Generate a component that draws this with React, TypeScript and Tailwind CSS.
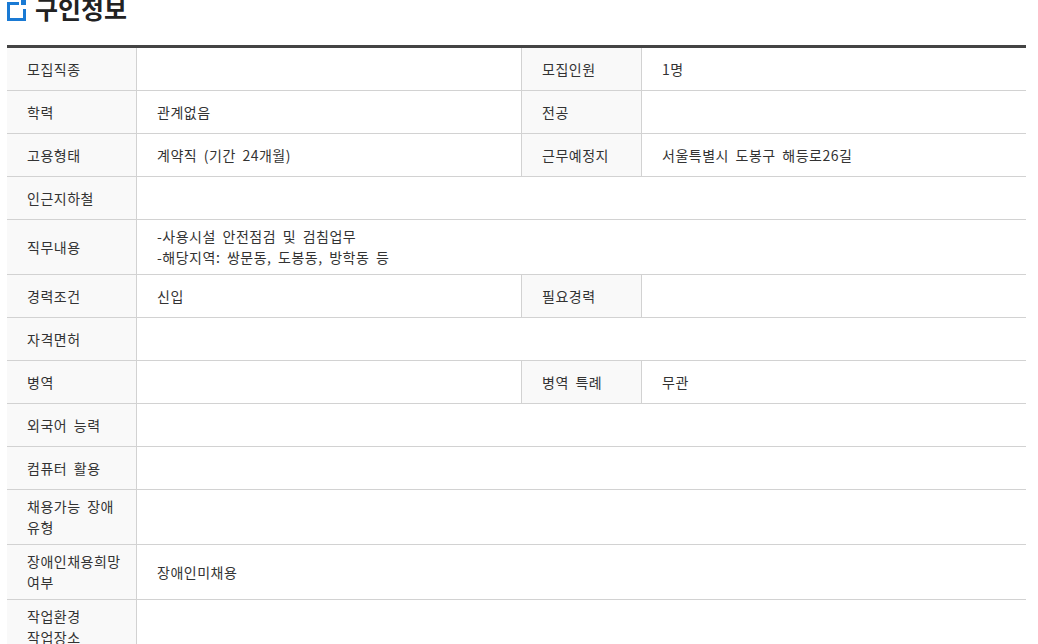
const FONT = { fontFamily: '"Noto Sans CJK KR", "Noto Sans", sans-serif' };

type Row =
  | { kind: 'half'; l1: string; v1?: string; l2: string; v2?: string }
  | { kind: 'full'; l1: string; v1?: string };

const rows: Row[] = [
  { kind: 'half', l1: '모집직종', v1: '', l2: '모집인원', v2: '1명' },
  { kind: 'half', l1: '학력', v1: '관계없음', l2: '전공', v2: '' },
  { kind: 'half', l1: '고용형태', v1: '계약직 (기간 24개월)', l2: '근무예정지', v2: '서울특별시 도봉구 해등로26길' },
  { kind: 'full', l1: '인근지하철' },
  { kind: 'full', l1: '직무내용', v1: '-사용시설 안전점검 및 검침업무\n-해당지역: 쌍문동, 도봉동, 방학동 등' },
  { kind: 'half', l1: '경력조건', v1: '신입', l2: '필요경력', v2: '' },
  { kind: 'full', l1: '자격면허' },
  { kind: 'half', l1: '병역', v1: '', l2: '병역 특례', v2: '무관' },
  { kind: 'full', l1: '외국어 능력' },
  { kind: 'full', l1: '컴퓨터 활용' },
  { kind: 'full', l1: '채용가능 장애\n유형' },
  { kind: 'full', l1: '장애인채용희망\n여부', v1: '장애인미채용' },
  { kind: 'full', l1: '작업환경\n작업장소' },
];

function Label({ text }: { text: string }) {
  return (
    <div className="flex min-h-[42px] items-center whitespace-pre-line border-r border-[#d2d2d2] bg-[#f9f9f9] py-[6px] pl-5 pr-2 leading-[21px]">
      {text}
    </div>
  );
}

function Value({ text, border }: { text?: string; border?: boolean }) {
  return (
    <div className={`flex min-h-[42px] items-center whitespace-pre-line py-[6px] pl-5 pr-3 leading-[21px] ${border ? 'border-r border-[#d2d2d2]' : ''}`}>
      {text}
    </div>
  );
}

// blue box with a notched top-right corner
function BoxIcon() {
  return (
    <svg width="19" height="22" viewBox="0 0 19 22" className="shrink-0">
      <path d="M12 3.5H1.5V19.5H17.5V9" fill="none" stroke="#1a7ad4" strokeWidth="3" />
      <rect x="14" y="0" width="5" height="5" fill="#1a7ad4" />
    </svg>
  );
}

export default function App() {
  return (
    <div className="min-h-screen overflow-hidden bg-white text-[14px] tracking-[0.5px] text-[#333] [word-spacing:3px]" style={FONT}>
      <div className="ml-[7px] w-[1019px]">
        <div className="-mt-[6px] flex items-end gap-[9px]">
          <BoxIcon />
          <h2 className="text-[25px] font-bold leading-[28px] tracking-normal text-[#222]">구인정보</h2>
        </div>
        <div className="mt-[23px] border-t-[3px] border-[#444]">
          {rows.map((r, i) =>
            r.kind === 'half' ? (
              <div key={i} className="grid grid-cols-[130px_385px_120px_1fr] border-b border-[#d2d2d2]">
                <Label text={r.l1} />
                <Value text={r.v1} border />
                <Label text={r.l2} />
                <Value text={r.v2} />
              </div>
            ) : (
              <div key={i} className="grid grid-cols-[130px_1fr] border-b border-[#d2d2d2]">
                <Label text={r.l1} />
                <Value text={r.v1} />
              </div>
            )
          )}
        </div>
      </div>
    </div>
  );
}
